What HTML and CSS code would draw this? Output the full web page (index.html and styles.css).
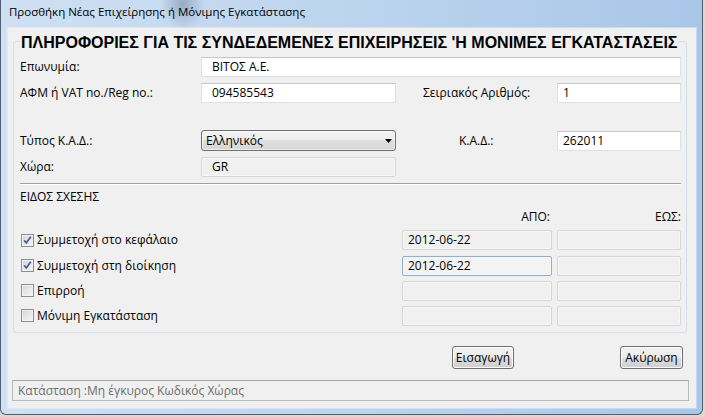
FILE: index.html
```html
<!DOCTYPE html>
<html lang="el">
<head>
<meta charset="utf-8">
<title>Προσθήκη Νέας Επιχείρησης ή Μόνιμης Εγκατάστασης</title>
<link rel="stylesheet" href="styles.css">
</head>
<body>
<div class="window">
  <div class="titlebar">Προσθήκη Νέας Επιχείρησης ή Μόνιμης Εγκατάστασης</div>
  <div class="client">
    <fieldset class="group">
      <legend>ΠΛΗΡΟΦΟΡΙΕΣ ΓΙΑ ΤΙΣ ΣΥΝΔΕΔΕΜΕΝΕΣ ΕΠΙΧΕΙΡΗΣΕΙΣ 'Η ΜΟΝΙΜΕΣ ΕΓΚΑΤΑΣΤΑΣΕΙΣ</legend>
      <div class="grid-top">
        <span class="lbl r1">Επωνυμία:</span>
        <div class="tb pad r1 wide">ΒΙΤΟΣ Α.Ε.</div>

        <span class="lbl r2">ΑΦΜ ή VAT no./Reg no.:</span>
        <div class="tb pad r2 c2">094585543</div>
        <span class="lbl r2 c3 serial">Σειριακός Αριθμός:</span>
        <div class="tb r2 c4">1</div>

        <span class="lbl r4">Τύπος Κ.Α.Δ.:</span>
        <div class="combo r4 c2"><span>Ελληνικός</span><svg class="arrow" width="7" height="4" viewBox="0 0 7 4"><path d="M0 0H7L3.5 4Z" fill="#000"/></svg></div>
        <span class="lbl r4 c3 kad">Κ.Α.Δ.:</span>
        <div class="tb r4 c4">262011</div>

        <span class="lbl r5">Χώρα:</span>
        <div class="tb pad off r5 c2">GR</div>
      </div>
      <div class="sep"></div>
      <div class="rel-title">ΕΙΔΟΣ ΣΧΕΣΗΣ</div>
      <div class="rel-grid">
        <span></span>
        <span class="colhead apo">ΑΠΟ:</span>
        <span class="colhead">ΕΩΣ:</span>

        <label class="chk"><span class="cb"><svg width="11" height="11" viewBox="0 0 11 11"><path d="M2 5.2L4.3 7.8L8.8 1.8" fill="none" stroke="#4b5f98" stroke-width="1.7"/></svg></span>Συμμετοχή στο κεφάλαιο</label>
        <div class="tb off">2012-06-22</div>
        <div class="tb off"></div>

        <label class="chk"><span class="cb"><svg width="11" height="11" viewBox="0 0 11 11"><path d="M2 5.2L4.3 7.8L8.8 1.8" fill="none" stroke="#4b5f98" stroke-width="1.7"/></svg></span>Συμμετοχή στη διοίκηση</label>
        <div class="tb off focus">2012-06-22</div>
        <div class="tb off"></div>

        <label class="chk"><span class="cb"></span>Επιρροή</label>
        <div class="tb off"></div>
        <div class="tb off"></div>

        <label class="chk"><span class="cb"></span>Μόνιμη Εγκατάσταση</label>
        <div class="tb off"></div>
        <div class="tb off"></div>
      </div>
    </fieldset>
    <div class="buttons">
      <button class="btn b1">Εισαγωγή</button>
      <button class="btn b2">Ακύρωση</button>
    </div>
    <div class="status">Κατάσταση :Μη έγκυρος Κωδικός Χώρας</div>
  </div>
</div>
</body>
</html>
```
FILE: styles.css
```css
* { box-sizing: border-box; }
html, body { margin: 0; padding: 0; }
body {
  width: 705px;
  height: 417px;
  overflow: hidden;
  background: #d9d9d9;
  font-family: "Open Sans", "Noto Sans", sans-serif;
  font-size: 12px;
  color: #000;
}
.window {
  width: 703px;
  height: 415px;
  border: 1px solid #51606f;
  border-top: none;
  border-radius: 0 0 6px 6px;
  padding: 0 6px 6px 7px;
  background:
    radial-gradient(ellipse 22px 26px at 182px 4px, rgba(70, 85, 105, 0.35), rgba(70, 85, 105, 0) 100%),
    linear-gradient(to right, #cfe0f3, #bed5ee 45%, #a9c6e8);
  display: flex;
  flex-direction: column;
}
.titlebar {
  height: 28px;
  flex: none;
  padding: 4px 0 0 1px;
  font-size: 11.5px;
  line-height: 16px;
  white-space: nowrap;
}
.client {
  flex: 1;
  background: #f0f0f0;
  display: flex;
  flex-direction: column;
  box-shadow: 0 0 0 1px rgba(255, 255, 255, 0.35);
}
.group {
  margin: 2px 9px 0 5px;
  padding: 5px 5px 7px 6px;
  border: 1px solid #d5dfe5;
  border-radius: 3px;
  min-width: 0;
}
.group legend {
  padding: 4px 1px 0;
  margin: 0;
  font: bold 16px/18px "Liberation Sans", Arial, sans-serif;
  white-space: nowrap;
}
.grid-top {
  display: grid;
  grid-template-columns: 181px 195px 161px 124px;
  grid-template-rows: 20px 20px 15px 21px 20px;
  row-gap: 6px;
  align-items: center;
}
.lbl { grid-column: 1; line-height: 16px; white-space: nowrap; }
.r1 { grid-row: 1; }
.r2 { grid-row: 2; }
.r4 { grid-row: 4; }
.r5 { grid-row: 5; }
.c2 { grid-column: 2; }
.c3 { grid-column: 3; }
.c4 { grid-column: 4; }
.wide { grid-column: 2 / 5; }
.serial { padding-left: 27px; }
.kad { padding-left: 63px; }

.tb {
  height: 20px;
  border: 1px solid #dde1e6;
  border-top-color: #c3c7cc;
  background: #fff;
  padding: 0 5px;
  line-height: 18px;
  white-space: nowrap;
}
.tb.pad { padding-left: 10px; }
.tb.off {
  background: #f0f0f0;
  border-color: #d6d6d6;
  border-radius: 2px;
  box-shadow: inset 0 0 0 1px #f7f7f7;
}
.tb.focus { border-color: #8fb0d6; background: #f3f3f3; }

.combo {
  height: 21px;
  border: 1px solid #707070;
  border-radius: 3px;
  background: linear-gradient(#f3f3f3, #ececec 50%, #e0e0e0 50%, #d6d6d6);
  box-shadow: inset 0 0 0 1px rgba(255, 255, 255, 0.55);
  display: flex;
  align-items: center;
  justify-content: space-between;
  padding: 0 3px 0 4px;
}
.arrow { display: block; }

.sep {
  margin-top: 6px;
  border-top: 1px solid #a0a0a0;
  border-bottom: 1px solid #fff;
}
.rel-title {
  margin-top: 4px;
  line-height: 16px;
}
.rel-grid {
  margin-top: 4px;
  display: grid;
  grid-template-columns: 377px 150px 124px;
  column-gap: 5px;
  grid-template-rows: 16px repeat(4, 20px);
  row-gap: 5px;
  align-items: center;
}
.rel-grid > .chk:nth-child(n+7),
.rel-grid > .tb:nth-child(n+7) { margin-top: 1px; }
.colhead { text-align: right; line-height: 16px; }
.colhead.apo { padding-right: 2px; }
.chk {
  display: flex;
  align-items: center;
  gap: 3px;
  padding-left: 1px;
  line-height: 16px;
  white-space: nowrap;
}
.cb {
  width: 13px;
  height: 13px;
  flex: none;
  border: 1px solid #8e8f8f;
  background: linear-gradient(135deg, #d3d6da, #f7f7f7);
  box-shadow: inset 0 0 0 1px #f2f2f2;
  display: flex;
  align-items: center;
  justify-content: center;
}
.cb svg { display: block; }

.buttons {
  display: flex;
  justify-content: flex-end;
  gap: 106px;
  margin: 13px 13px 0 0;
}
.btn {
  height: 23px;
  padding: 0;
  border: 1px solid #707070;
  border-radius: 3px;
  background: linear-gradient(#f2f2f2, #ebebeb 50%, #dddddd 50%, #cfcfcf);
  box-shadow: inset 0 0 0 1px #fbfbfb;
  font-family: "Open Sans", "Noto Sans", sans-serif;
  font-size: 12px;
  color: #000;
}
.b1 { width: 62px; }
.b2 { width: 63px; }

.status {
  height: 21px;
  margin: 11px 7px 0 4px;
  border: 1px solid #b9b9b9;
  border-top-color: #a5a5a5;
  background: #f0f0f0;
  color: #6d6d6d;
  line-height: 19px;
  padding-left: 5px;
  white-space: nowrap;
}
```
